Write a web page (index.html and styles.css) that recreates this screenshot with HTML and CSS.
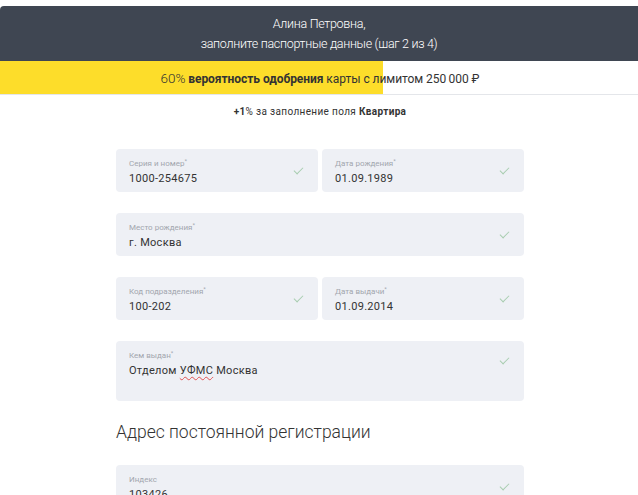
FILE: index.html
```html
<!DOCTYPE html>
<html lang="ru">
<head>
<meta charset="utf-8">
<link rel="stylesheet" href="styles.css">
</head>
<body>
<div class="top-gap"></div>
<header class="header">
  <div class="header-line">Алина Петровна,</div>
  <div class="header-line">заполните паспортные данные (шаг 2 из 4)</div>
</header>
<div class="progress">
  <div class="progress-fill" style="width:60%"></div>
  <div class="progress-text"><span class="pct">60%</span> <b>вероятность одобрения</b> карты с лимитом 250&#8201;000 ₽</div>
</div>
<p class="hint"><b>+1</b>% за заполнение поля <b>Квартира</b></p>

<main class="form">
  <div class="row two">
    <div class="field"><div class="label">Серия и номер<sup>*</sup></div><div class="value">1000-254675</div><span class="check"></span></div>
    <div class="field"><div class="label">Дата рождения<sup>*</sup></div><div class="value">01.09.1989</div><span class="check"></span></div>
  </div>
  <div class="row">
    <div class="field"><div class="label">Место рождения<sup>*</sup></div><div class="value">г. Москва</div><span class="check"></span></div>
  </div>
  <div class="row two">
    <div class="field"><div class="label">Код подразделения<sup>*</sup></div><div class="value">100-202</div><span class="check"></span></div>
    <div class="field"><div class="label">Дата выдачи<sup>*</sup></div><div class="value">01.09.2014</div><span class="check"></span></div>
  </div>
  <div class="row">
    <div class="field tall"><div class="label">Кем выдан<sup>*</sup></div><div class="value">Отделом <span class="spell">УФМС</span> Москва</div><span class="check"></span></div>
  </div>
  <h2 class="section-title">Адрес постоянной регистрации</h2>
  <div class="row">
    <div class="field"><div class="label">Индекс</div><div class="value">103426</div><span class="check"></span></div>
  </div>
</main>
</body>
</html>
```
FILE: styles.css
```css
html, body {
  margin: 0;
  padding: 0;
  background: #fff;
  font-family: Roboto, "Noto Sans", sans-serif;
  overflow: hidden;
  height: 495px;
}
.top-gap {
  height: 6px;
}
.header {
  background: #3f4652;
  color: #fff;
  height: 55px;
  border-top-left-radius: 4px;
  display: flex;
  flex-direction: column;
  align-items: center;
  justify-content: center;
  font-size: 12.5px;
  font-weight: 300;
  letter-spacing: -0.3px;
  line-height: 20px;
  padding-top: 1px;
  box-sizing: border-box;
}
.progress {
  position: relative;
  height: 33px;
  border-bottom: 1px solid #e4e6ea;
  display: flex;
  align-items: center;
  justify-content: center;
}
.progress-fill {
  position: absolute;
  left: 0;
  top: 0;
  bottom: 0;
  background: #fddd2a;
}
.progress-text {
  position: relative;
  font-size: 12px;
  color: #333;
  letter-spacing: -0.05px;
  padding-left: 2px;
}
.pct {
  font-size: 13.5px;
  font-weight: 300;
}
.progress-text b {
  font-weight: 700;
}
.hint {
  margin: 11px 0 0;
  text-align: center;
  font-size: 10px;
  letter-spacing: 0.35px;
  color: #333;
  padding-left: 2px;
}
.hint b {
  font-weight: 700;
}
.form {
  width: 408px;
  margin: 32px auto 0 116px;
  display: flex;
  flex-direction: column;
  gap: 21px;
}
.row {
  display: flex;
  gap: 4px;
}
.field {
  position: relative;
  flex: 1;
  height: 43px;
  background: #eef0f5;
  border-radius: 4px;
  padding: 10px 13px 0;
  box-sizing: border-box;
}
.field.tall {
  height: 60px;
}
.label {
  font-size: 8px;
  color: #a2a6ae;
  line-height: 10px;
}
.label sup {
  font-size: 6px;
  vertical-align: 3px;
  line-height: 0;
}
.value {
  font-size: 11px;
  color: #333;
  line-height: 16px;
  margin-top: 2px;
  letter-spacing: 0.3px;
}
.spell {
  text-decoration: underline wavy #e05050;
  text-decoration-thickness: 1px;
  text-underline-offset: 2px;
}
.check {
  position: absolute;
  right: 15px;
  top: 18px;
  width: 8px;
  height: 4px;
  border-left: 1px solid #a8cdb0;
  border-bottom: 1px solid #a8cdb0;
  transform: rotate(-45deg);
}
.field.tall .check {
  top: 16px;
}
.section-title {
  margin: -1px 0 1px;
  font-size: 17.5px;
  font-weight: 300;
  color: #333;
  line-height: 22px;
  height: 22px;
}
```
